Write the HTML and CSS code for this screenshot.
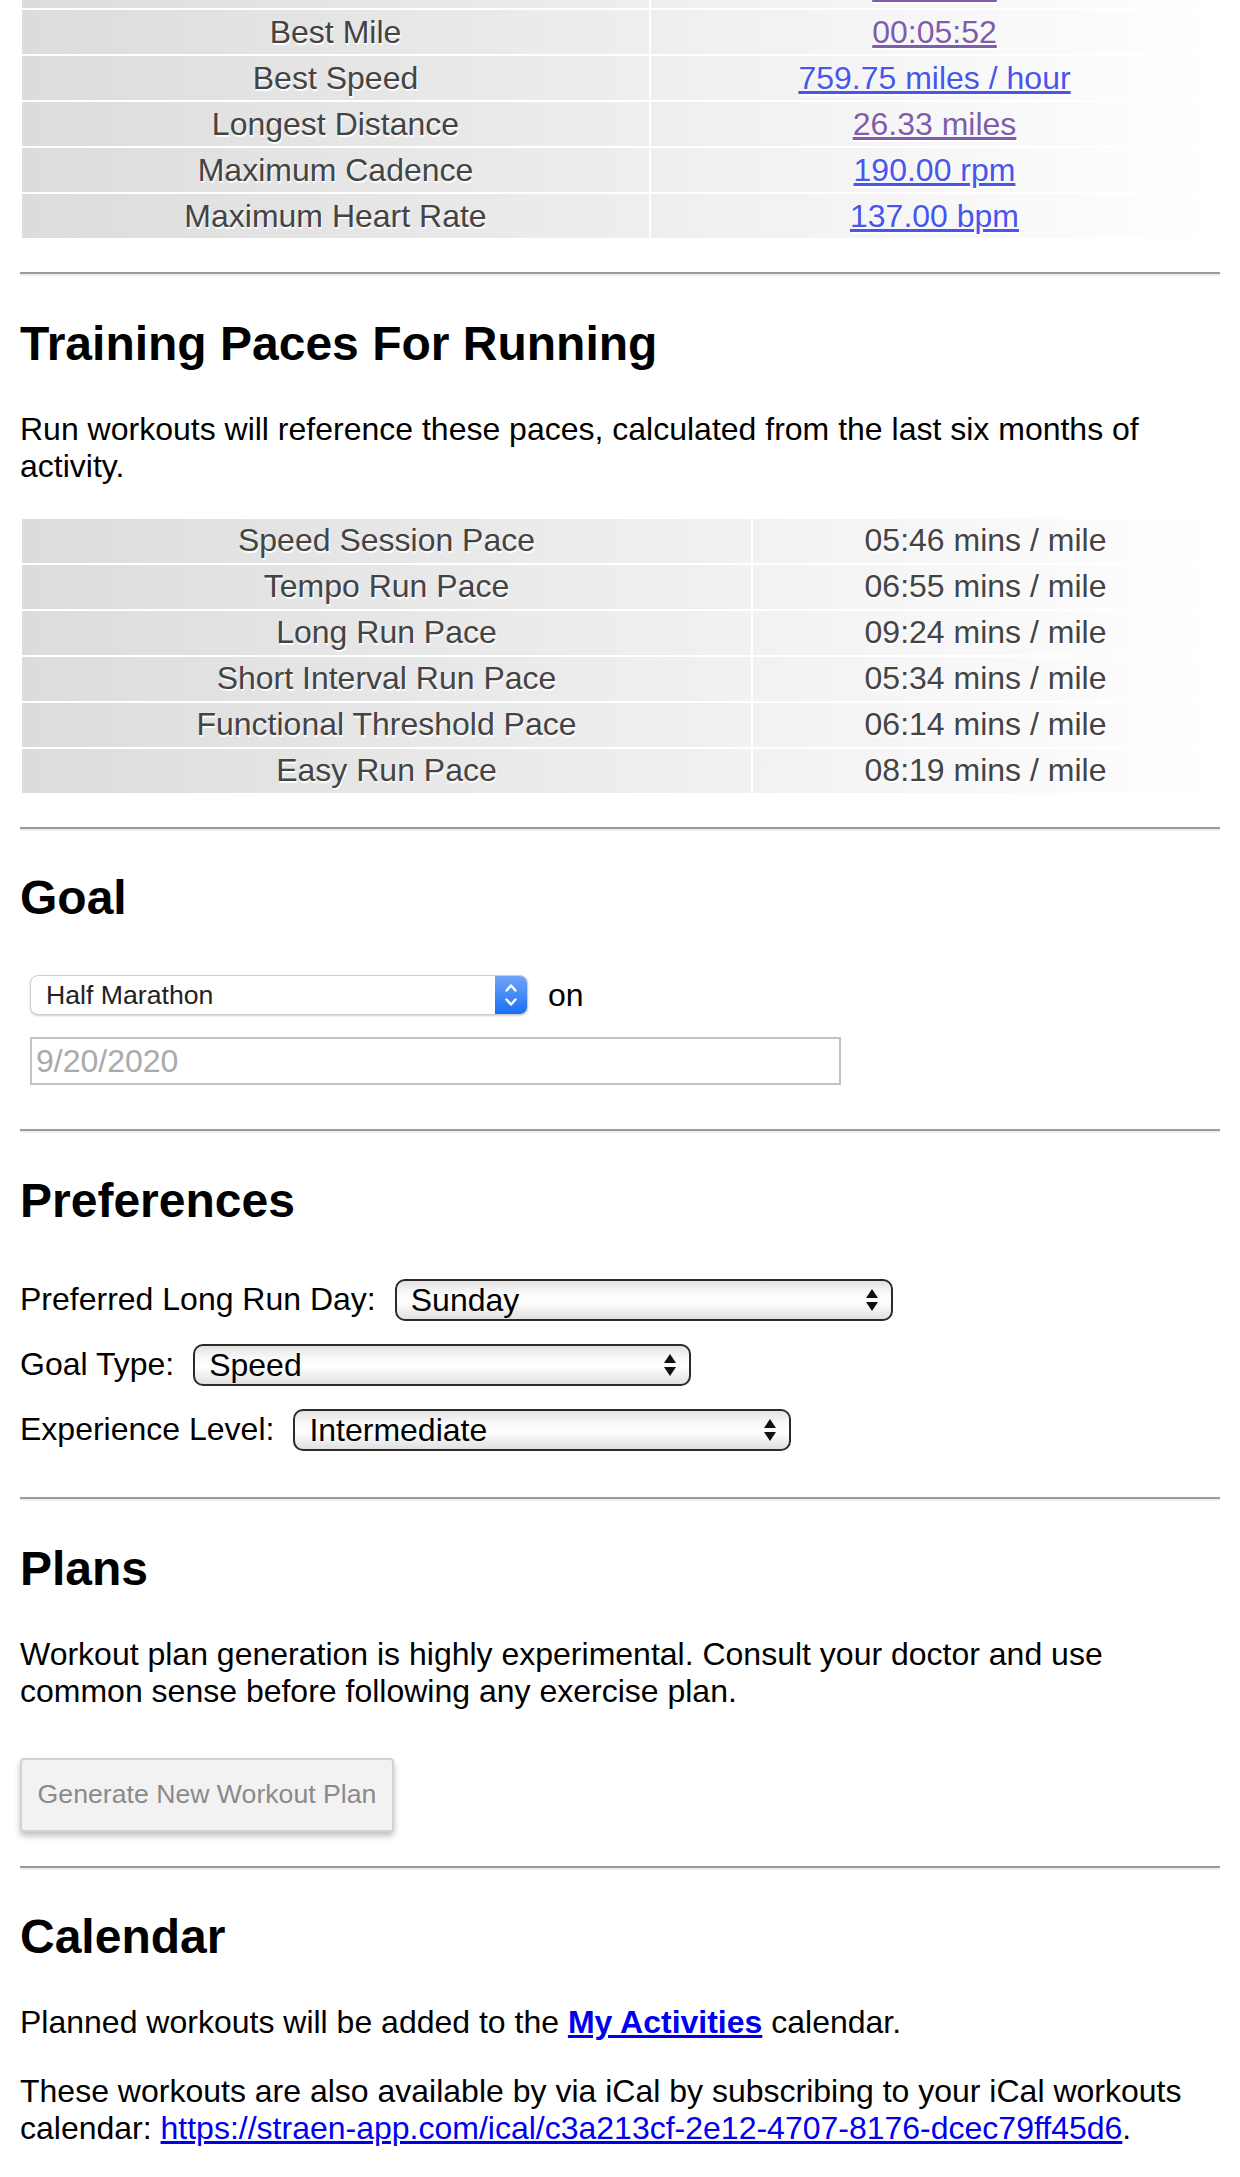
FILE: index.html
```html
<!DOCTYPE html>
<html lang="en">
<head>
<meta charset="utf-8">
<title>Running Settings</title>
<link rel="stylesheet" href="styles.css">
</head>
<body>
<div class="page">
  <table class="stats stats-records">
    <colgroup><col class="col-a"><col></colgroup>
    <tr><td>Best 1K</td><td><a class="visited" href="#">00:03:05</a></td></tr>
    <tr><td>Best Mile</td><td><a class="visited" href="#">00:05:52</a></td></tr>
    <tr><td>Best Speed</td><td><a href="#">759.75 miles / hour</a></td></tr>
    <tr><td>Longest Distance</td><td><a class="visited" href="#">26.33 miles</a></td></tr>
    <tr><td>Maximum Cadence</td><td><a href="#">190.00 rpm</a></td></tr>
    <tr><td>Maximum Heart Rate</td><td><a href="#">137.00 bpm</a></td></tr>
  </table>

  <hr class="rule">

  <h2>Training Paces For Running</h2>
  <p>Run workouts will reference these paces, calculated from the last six months of activity.</p>
  <table class="stats stats-paces">
    <colgroup><col class="col-b"><col></colgroup>
    <tr><td>Speed Session Pace</td><td>05:46 mins / mile</td></tr>
    <tr><td>Tempo Run Pace</td><td>06:55 mins / mile</td></tr>
    <tr><td>Long Run Pace</td><td>09:24 mins / mile</td></tr>
    <tr><td>Short Interval Run Pace</td><td>05:34 mins / mile</td></tr>
    <tr><td>Functional Threshold Pace</td><td>06:14 mins / mile</td></tr>
    <tr><td>Easy Run Pace</td><td>08:19 mins / mile</td></tr>
  </table>

  <hr class="rule">

  <h2>Goal</h2>
  <div class="goal-form">
    <div class="goal-line">
      <span class="goal-select">
        <select>
          <option>Half Marathon</option>
          <option>Marathon</option>
          <option>10K</option>
          <option>5K</option>
        </select>
        <span class="goal-arrows">
          <svg width="16" height="26" viewBox="0 0 16 26"><path d="M3.5 8.5 L8 3.5 L12.5 8.5" fill="none" stroke="#fff" stroke-width="2.4" stroke-linecap="round" stroke-linejoin="round"/><path d="M3.5 17.5 L8 22.5 L12.5 17.5" fill="none" stroke="#fff" stroke-width="2.4" stroke-linecap="round" stroke-linejoin="round"/></svg>
        </span>
      </span>
      <span class="goal-on">on</span>
    </div>
    <input class="date-input" type="text" placeholder="9/20/2020">
  </div>

  <hr class="rule">

  <h2>Preferences</h2>
  <div class="prefs">
    <div class="pref-row">
      <label>Preferred Long Run Day:</label>
      <span class="menu">
        <select><option>Sunday</option><option>Saturday</option></select>
        <svg width="14" height="28" viewBox="0 0 14 28"><path d="M7 3 L13 12 L1 12 Z" fill="#111"/><path d="M1 16 L13 16 L7 25 Z" fill="#111"/></svg>
      </span>
    </div>
    <div class="pref-row">
      <label>Goal Type:</label>
      <span class="menu">
        <select><option>Speed</option><option>Distance</option></select>
        <svg width="14" height="28" viewBox="0 0 14 28"><path d="M7 3 L13 12 L1 12 Z" fill="#111"/><path d="M1 16 L13 16 L7 25 Z" fill="#111"/></svg>
      </span>
    </div>
    <div class="pref-row">
      <label>Experience Level:</label>
      <span class="menu">
        <select><option>Intermediate</option><option>Beginner</option><option>Advanced</option></select>
        <svg width="14" height="28" viewBox="0 0 14 28"><path d="M7 3 L13 12 L1 12 Z" fill="#111"/><path d="M1 16 L13 16 L7 25 Z" fill="#111"/></svg>
      </span>
    </div>
  </div>

  <hr class="rule">

  <h2>Plans</h2>
  <p>Workout plan generation is highly experimental. Consult your doctor and use common sense before following any exercise plan.</p>
  <div class="actions">
    <button class="gen-btn" type="button">Generate New Workout Plan</button>
  </div>

  <hr class="rule">

  <h2>Calendar</h2>
  <p>Planned workouts will be added to the <a class="strong-link" href="#">My Activities</a> calendar.</p>
  <p>These workouts are also available by via iCal by subscribing to your iCal workouts calendar: <a href="#">https://straen-app.com/ical/c3a213cf-2e12-4707-8176-dcec79ff45d6</a>.</p>
</div>
</body>
</html>
```
FILE: styles.css
```css
html, body {
  margin: 0;
  padding: 0;
  background: #fff;
}

body {
  font-family: "Liberation Sans", Arial, Helvetica, sans-serif;
  font-size: 32px;
  color: #000;
}

.page {
  padding: 0 20px;
}

a {
  color: #0000ee;
}

.strong-link {
  font-weight: bold;
}

/* stats tables */
.stats {
  width: 100%;
  table-layout: fixed;
  border-spacing: 2px;
  border-collapse: separate;
  color: #444;
  text-shadow: 1px 2px 1px #fff;
}

.stats-records {
  margin-top: -38px;
}

.col-a {
  width: 627px;
}

.col-b {
  width: 729px;
}

.stats tr {
  background: linear-gradient(to right, #dcdcdc, #ffffff);
}

.stats td {
  height: 44px;
  padding: 0 4px;
  text-align: center;
  vertical-align: middle;
  box-sizing: border-box;
}

.stats a {
  color: rgb(72, 86, 236);
}

.stats a.visited {
  color: rgb(128, 92, 172);
}

/* rule */
.rule {
  height: 0;
  border: 0;
  border-top: 2px solid #9a9a9a;
  border-bottom: 2px solid #eeeeee;
  margin: 32px 0;
}

h2 {
  font-size: 48px;
  font-weight: bold;
  margin: 39.84px 0;
}

p {
  margin: 32px 0;
}

/* goal */
.goal-form {
  padding: 10px 10px 12px;
  display: flex;
  flex-direction: column;
  align-items: flex-start;
  gap: 22px;
}

.goal-line {
  display: flex;
  align-items: center;
  gap: 20px;
}

.goal-select {
  display: inline-flex;
  width: 498px;
  height: 40px;
  box-sizing: border-box;
  border: 1px solid #cdcdcd;
  border-radius: 8px;
  background: #fff;
  box-shadow: 0 1px 2px rgba(0, 0, 0, 0.18);
  overflow: hidden;
}

.goal-select select {
  -webkit-appearance: none;
  appearance: none;
  flex: 1;
  border: 0;
  margin: 0;
  background: transparent;
  font-family: "Liberation Sans", Arial, sans-serif;
  font-size: 26.67px;
  color: #222;
  padding: 0 0 0 15px;
  outline: none;
}

.goal-arrows {
  width: 32px;
  display: flex;
  align-items: center;
  justify-content: center;
  background: linear-gradient(#70a5f9, #1a6ef5);
}

.goal-on {
  font-size: 32px;
}

.date-input {
  width: 811px;
  height: 48px;
  box-sizing: border-box;
  border: 2px solid #c2c2c2;
  padding: 0 4px;
  margin: 0;
  font-family: "Liberation Sans", Arial, sans-serif;
  font-size: 32px;
  color: #aaa;
  outline: none;
}

.date-input::placeholder {
  color: #aaa;
}

/* preferences */
.prefs {
  padding: 11px 0 14px;
  display: flex;
  flex-direction: column;
  align-items: flex-start;
  gap: 23px;
}

.pref-row {
  display: flex;
  align-items: center;
  gap: 19px;
}

.menu {
  display: inline-flex;
  align-items: center;
  width: 498px;
  height: 42px;
  box-sizing: border-box;
  border: 2px solid #2b2b2b;
  border-radius: 10px;
  background: linear-gradient(#e2e2e2 0%, #f8f8f8 30%, #ffffff 55%, #e0e0e0 100%);
}

.menu select {
  -webkit-appearance: none;
  appearance: none;
  flex: 1;
  height: 100%;
  border: 0;
  margin: 0;
  background: transparent;
  font-family: "Liberation Sans", Arial, sans-serif;
  font-size: 32px;
  color: #000;
  padding: 0 0 0 14px;
  outline: none;
}

.menu svg {
  margin-right: 12px;
  flex: none;
}

/* plans */
.actions {
  padding: 16px 0 2px;
}

.gen-btn {
  display: block;
  width: 374px;
  height: 74px;
  box-sizing: border-box;
  margin: 0;
  font-family: "Liberation Sans", Arial, sans-serif;
  font-size: 26.67px;
  color: #8a8a8a;
  background: #f2f2f2;
  border: 2px solid #d2d2d2;
  border-radius: 4px;
  box-shadow: 0 4px 6px rgba(0, 0, 0, 0.25);
}
```
